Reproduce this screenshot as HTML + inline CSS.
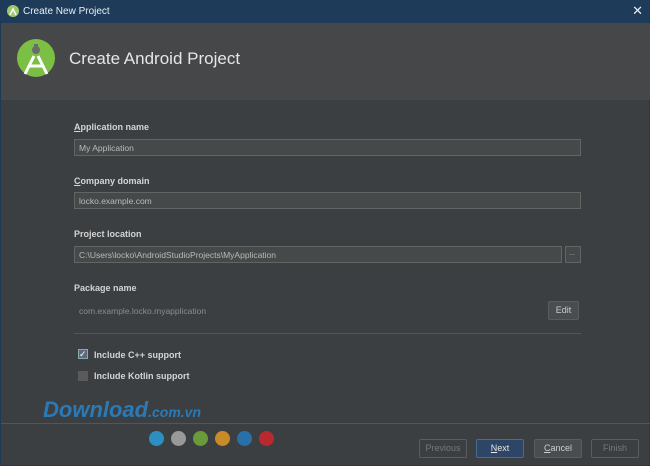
<!DOCTYPE html>
<html><head><style>
*{margin:0;padding:0;box-sizing:border-box}
body{width:650px;height:466px;background:#3c3f41;font-family:"Liberation Sans",sans-serif;position:relative;overflow:hidden;border:1px solid #1e3a58;border-top:none}
.tb{position:absolute;left:0;top:0;width:650px;height:23px;background:#1f3b5a;color:#e8eef4;font-size:10px}
.hd{position:absolute;left:0;top:23px;width:650px;height:77px;background:#464748}
.l{position:absolute;color:#d4d4d4;font-size:9px;font-weight:bold}
.in{position:absolute;height:17px;background:#45494a;border:1px solid #646464;color:#bbb;font-size:8.5px;padding:3px 4px}
.btn{position:absolute;height:19px;border:1px solid #5a5d5f;border-radius:2px;font-size:9px;color:#ccc;text-align:center;line-height:17px;background:#4a4d4f}
.d{position:absolute;top:431px;width:15px;height:15px;border-radius:50%}
</style></head><body>
<div class="tb">
<svg style="position:absolute;left:6px;top:5px" width="12" height="12" viewBox="0 0 12 12"><circle cx="6" cy="6" r="6" fill="#9ec86a"/><path d="M3 10 L6 4 L9 10" stroke="#fff" stroke-width="1.5" fill="none"/></svg>
<span style="position:absolute;left:22px;top:6px">Create New Project</span>
<span style="position:absolute;right:8px;top:3px;font-size:13px">✕</span>
</div>
<div class="hd">
<svg style="position:absolute;left:15px;top:15px" width="40" height="42" viewBox="0 0 40 42"><circle cx="20" cy="20" r="19" fill="#7cbf45"/><circle cx="20" cy="12" r="4" fill="#6b6b6b"/><rect x="18" y="6" width="4" height="3" fill="#6b6b6b"/><path d="M9 36 L18 18 M31 36 L22 18 M13 28 L27 28" stroke="#fff" stroke-width="3" fill="none"/></svg>
<div style="position:absolute;left:68px;top:26px;font-size:17px;color:#e6e6e6">Create Android Project</div>
</div>
<div class="l" style="left:73px;top:122px"><u>A</u>pplication name</div>
<div class="in" style="left:73px;top:139px;width:507px">My Application</div>
<div class="l" style="left:73px;top:176px"><u>C</u>ompany domain</div>
<div class="in" style="left:73px;top:192px;width:507px">locko.example.com</div>
<div class="l" style="left:73px;top:229px">Project location</div>
<div class="in" style="left:73px;top:246px;width:488px">C:\Users\locko\AndroidStudioProjects\MyApplication</div>
<div class="in" style="left:564px;top:246px;width:16px;font-size:7px;padding:3px 3px">...</div>
<div class="l" style="left:73px;top:283px">Package name</div>
<div style="position:absolute;left:78px;top:306px;font-size:8.5px;color:#8c8c8c">com.example.locko.myapplication</div>
<div class="btn" style="left:547px;top:301px;width:31px">Edit</div>
<div style="position:absolute;left:73px;top:333px;width:507px;height:1px;background:#555"></div>
<div style="position:absolute;left:77px;top:349px;width:10px;height:10px;background:#5b6b7d;border:1px solid #8aa;color:#fff;font-size:9px;line-height:8px">✓</div>
<div class="l" style="left:93px;top:350px">Include C++ support</div>
<div style="position:absolute;left:77px;top:371px;width:10px;height:10px;background:#5a5a5a"></div>
<div class="l" style="left:93px;top:371px">Include Kotlin support</div>
<div style="position:absolute;left:42px;top:397px;font-size:22px;font-weight:bold;font-style:italic;color:#2a7ab8">Download<span style="font-size:14px">.com.vn</span></div>
<div style="position:absolute;left:0;top:423px;width:650px;height:1px;background:#555"></div>
<div class="d" style="left:148px;background:#2d8fc0"></div>
<div class="d" style="left:170px;background:#999"></div>
<div class="d" style="left:192px;background:#6a9a3a"></div>
<div class="d" style="left:214px;background:#c98a2a"></div>
<div class="d" style="left:236px;background:#2a70a8"></div>
<div class="d" style="left:258px;background:#b82a30"></div>
<div class="btn" style="left:418px;top:439px;width:48px;color:#777;background:#3c3f41">Previous</div>
<div class="btn" style="left:475px;top:439px;width:48px;background:#2d4566;color:#e8e8e8;border-color:#4a6a90"><u>N</u>ext</div>
<div class="btn" style="left:533px;top:439px;width:48px"><u>C</u>ancel</div>
<div class="btn" style="left:590px;top:439px;width:48px;color:#777;background:#3c3f41">Finish</div>
</body></html>
